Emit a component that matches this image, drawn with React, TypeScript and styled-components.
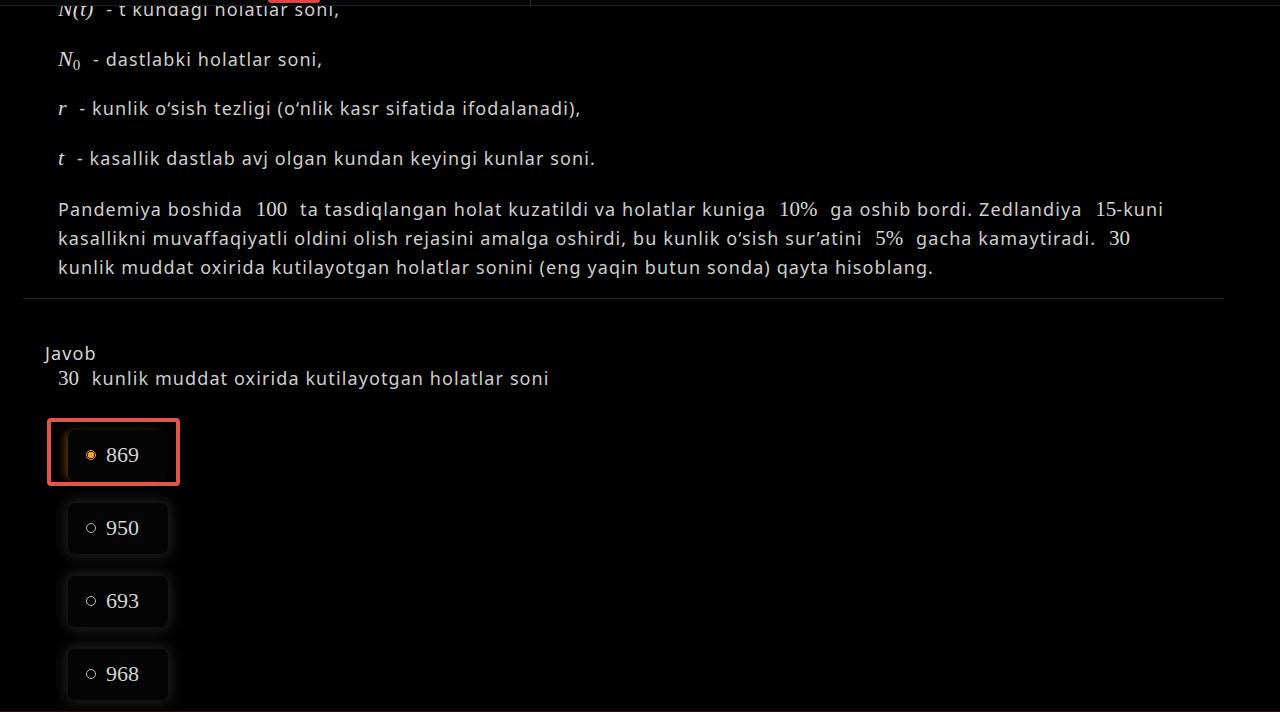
import React from 'react'
import styled, { createGlobalStyle } from 'styled-components';

const GlobalStyle = createGlobalStyle`
  html, body {
    margin: 0;
    padding: 0;
    background: #000000;
  }
  body {
    font-family: "Noto Sans", "Open Sans", sans-serif;
    color: #cfcfcf;
  }
`

interface IOption {
  value: string,
  selected?: boolean
}

const options: IOption[] = [
  { value: '869', selected: true },
  { value: '950' },
  { value: '693' },
  { value: '968' },
]

const App: React.FC = () => {
  return (
    <Screen>
      <GlobalStyle />
      <TopBar>
        <RedTab />
        <TabDivider />
      </TopBar>
      <Content>
        <Definition>
          <MathText>N(t)</MathText> - t kundagi holatlar soni,
        </Definition>
        <Definition>
          <MathText>N<Sub>0</Sub></MathText> - dastlabki holatlar soni,
        </Definition>
        <Definition>
          <MathText>r</MathText> - kunlik o‘sish tezligi (o‘nlik kasr sifatida ifodalanadi),
        </Definition>
        <Definition>
          <MathText>t</MathText> - kasallik dastlab avj olgan kundan keyingi kunlar soni.
        </Definition>
        <Paragraph>
          Pandemiya boshida <Num>100</Num> ta tasdiqlangan holat kuzatildi va holatlar kuniga <Num>10%</Num> ga oshib bordi.
          Zedlandiya <Num tight>15</Num>-kuni kasallikni muvaffaqiyatli oldini olish rejasini amalga oshirdi, bu kunlik o‘sish
          sur’atini <Num>5%</Num> gacha kamaytiradi. <Num>30</Num> kunlik muddat oxirida kutilayotgan holatlar sonini
          (eng yaqin butun sonda) qayta hisoblang.
        </Paragraph>
      </Content>
      <Divider />
      <AnswerBlock>
        <AnswerLabel>Javob</AnswerLabel>
        <AnswerQuestion><Num>30</Num> kunlik muddat oxirida kutilayotgan holatlar soni</AnswerQuestion>
        <OptionList>
          {options.map((o) => (
            <OptionSlot key={o.value}>
              {o.selected && <Highlight />}
              <OptionCard selected={o.selected}>
                <Radio selected={o.selected} />
                <OptionValue>{o.value}</OptionValue>
              </OptionCard>
            </OptionSlot>
          ))}
        </OptionList>
      </AnswerBlock>
    </Screen>
  )
}

export default App;

const Screen = styled.div`
  position: relative;
  width: 1280px;
  height: 712px;
  overflow: hidden;
  background: #000000;
  border-bottom: 1px solid #2a0c0c;
  box-sizing: border-box;
`
const TopBar = styled.div`
  position: absolute;
  top: 0;
  left: 0;
  right: 0;
  height: 5px;
  display: flex;
  align-items: flex-start;
  padding-left: 268px;
  border-bottom: 1px solid #1d1d1d;
  background: #050505;
  z-index: 2;
`
const RedTab = styled.div`
  width: 52px;
  height: 3px;
  background: #e2473f;
  border-radius: 0 0 4px 4px;
`
const TabDivider = styled.div`
  width: 210px;
  height: 5px;
  border-right: 1px solid #2a2a2a;
`
const Content = styled.div`
  padding: 0 0 0 58px;
  margin-top: -5px;
  width: 1130px;
  letter-spacing: 1.1px;
`
const Definition = styled.p`
  margin: 0 0 20.5px 0;
  font-size: 18px;
  line-height: 29px;
  color: #cfcfcf;
`
const Paragraph = styled.p`
  margin: 0;
  padding-top: 1.5px;
  font-size: 18px;
  line-height: 29px;
  color: #cfcfcf;
`
const MathText = styled.span`
  font-family: "Liberation Serif", "DejaVu Serif", serif;
  font-style: italic;
  font-size: 22px;
  line-height: 1;
  letter-spacing: 0;
  margin-right: 7px;
  color: #d8d8d8;
`
const Sub = styled.sub`
  font-style: normal;
  font-size: 15px;
  vertical-align: -4px;
  line-height: 0;
`
const Num = styled.span<{ tight?: boolean }>`
  font-family: "Liberation Serif", "DejaVu Serif", serif;
  font-size: 21px;
  line-height: 1;
  letter-spacing: 0;
  margin: ${(p) => p.tight ? '0 0 0 7px' : '0 7px'};
  color: #d8d8d8;
`
const Divider = styled.div`
  margin: 16px 0 0 23px;
  width: 1201px;
  height: 1px;
  background: #262626;
`
const AnswerBlock = styled.div`
  padding: 43px 0 0 45px;
  letter-spacing: 1.1px;
`
const AnswerLabel = styled.div`
  font-size: 18px;
  line-height: 22px;
  color: #d6d6d6;
`
const AnswerQuestion = styled.div`
  margin-left: 6px;
  font-size: 18px;
  line-height: 29px;
  color: #cfcfcf;
`
const OptionList = styled.div`
  display: flex;
  flex-direction: column;
  gap: 22px;
  margin: 37px 0 0 23px;
`
const OptionSlot = styled.div`
  position: relative;
  width: 100px;
`
const Highlight = styled.div`
  position: absolute;
  left: -21px;
  top: -12px;
  width: 133px;
  height: 68px;
  box-sizing: border-box;
  border: 4px solid #e0554c;
  border-radius: 4px;
  z-index: 1;
`
const OptionCard = styled.div<{ selected?: boolean }>`
  height: 51px;
  display: flex;
  align-items: center;
  gap: 10px;
  padding-left: 18px;
  box-sizing: border-box;
  border-radius: 7px;
  background: #040404;
  box-shadow: ${(p) => p.selected
    ? '-5px 0 9px -2px rgba(214, 120, 20, 0.45)'
    : '0 0 14px 3px rgba(255, 255, 255, 0.13)'};
`
const Radio = styled.span<{ selected?: boolean }>`
  width: 10px;
  height: 10px;
  box-sizing: border-box;
  border-radius: 50%;
  border: 1.5px solid ${(p) => p.selected ? '#f39a1e' : '#bdbdbd'};
  background: ${(p) => p.selected ? 'radial-gradient(circle, #f7a21d 0 3px, #000 3.5px)' : 'transparent'};
`
const OptionValue = styled.span`
  font-family: "Liberation Serif", "DejaVu Serif", serif;
  font-size: 22px;
  letter-spacing: 0;
  color: #d4d4d4;
`
